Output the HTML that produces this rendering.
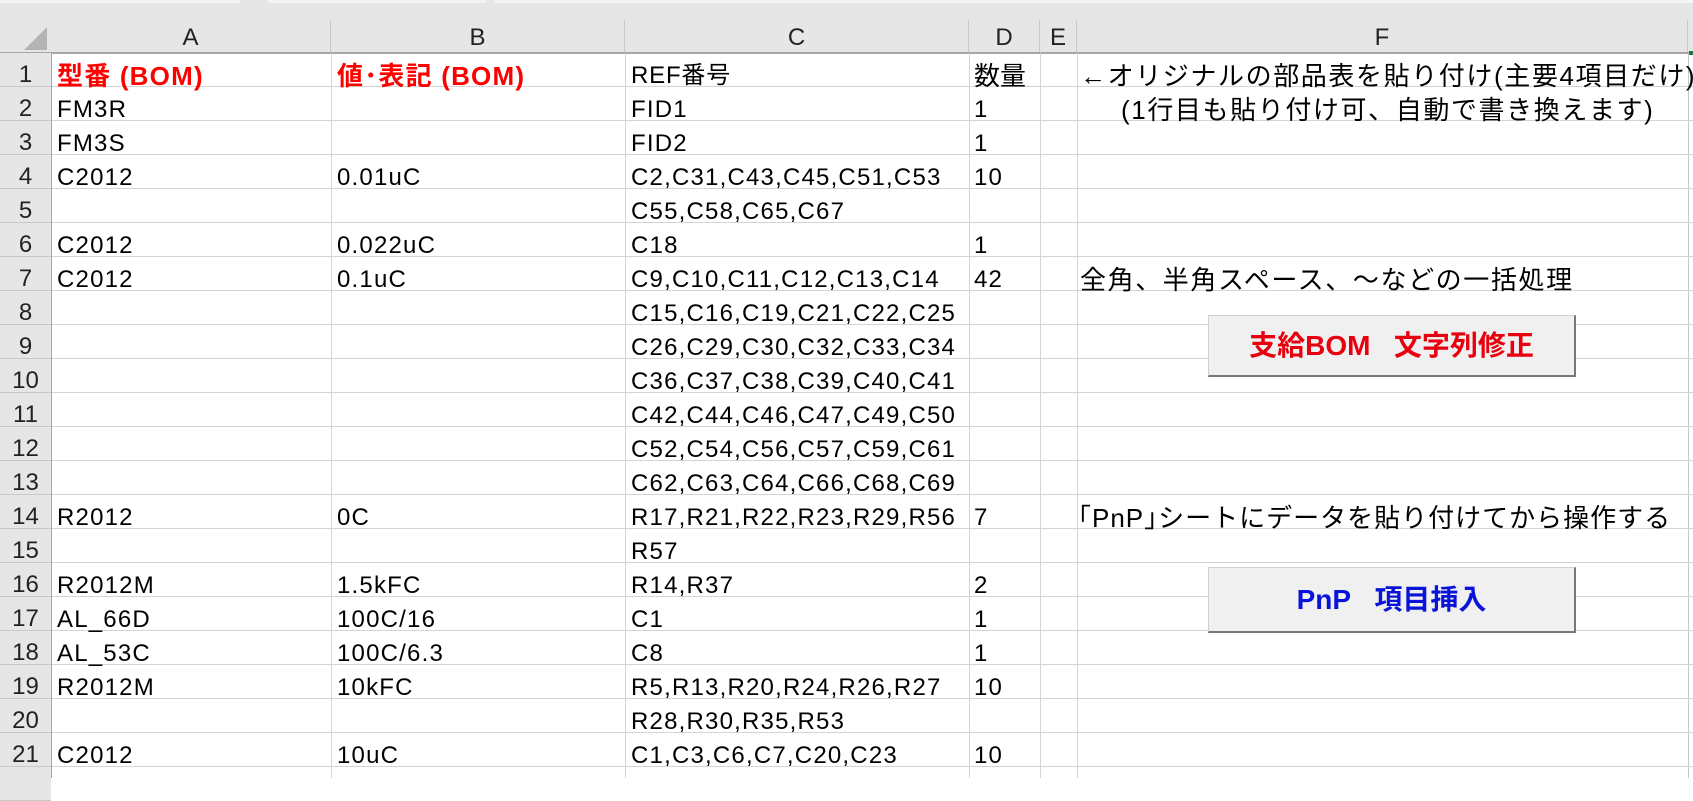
<!DOCTYPE html>
<html><head><meta charset="utf-8"><style>
body{margin:0;width:1693px;height:778px;overflow:hidden;background:#fff;position:relative;font-family:"Liberation Sans","Noto Sans CJK JP",sans-serif;}
.top{position:absolute;left:0;top:0;width:1693px;height:53px;background:#e6e6e6;}
.bar{position:absolute;top:0;height:3px;background:#f4f4f4;}
.ch{position:absolute;top:20px;height:33px;line-height:36px;text-align:center;font-size:24px;color:#222;border-right:1px solid #c8c8c8;box-sizing:border-box;}
.hline{position:absolute;left:0;top:52px;width:1693px;height:2px;background:#a6a6a6;}
.rh{position:absolute;left:0;width:51px;background:#e6e6e6;text-align:center;font-size:24px;color:#222;line-height:34px;border-bottom:1px solid #c8c8c8;box-sizing:border-box;padding-top:5px;}
.rhb{position:absolute;left:51px;top:53px;width:1px;height:725px;background:#a6a6a6;}
.gl{position:absolute;left:52px;width:1641px;height:1px;background:#d4d4d4;}
.vl{position:absolute;top:53px;width:1px;height:725px;background:#d4d4d4;}
.t{position:absolute;font-size:24px;letter-spacing:1.2px;white-space:nowrap;color:#000;line-height:34px;margin-top:2px;}
.j{font-size:26px;letter-spacing:1.6px;}
.r{color:#f00;font-weight:bold;font-size:26px;letter-spacing:1.2px;}
.btn{position:absolute;left:1208px;width:368px;background:#f0f0f0;border:1px solid #d0d0d0;border-right:2px solid #777;border-bottom:2px solid #777;box-sizing:border-box;text-align:center;font-weight:bold;font-size:28px;}
</style></head><body>
<div class="top"></div>
<div class="bar" style="left:0;width:240px"></div>
<div class="bar" style="left:268px;width:218px"></div>
<div class="bar" style="left:494px;width:1199px"></div>
<svg style="position:absolute;left:22px;top:27px" width="26" height="24"><polygon points="25,0 25,23 2,23" fill="#b4b4b4"/></svg>
<div class="ch" style="left:51px;width:280px">A</div>
<div class="ch" style="left:331px;width:294px">B</div>
<div class="ch" style="left:625px;width:344px">C</div>
<div class="ch" style="left:969px;width:71px">D</div>
<div class="ch" style="left:1040px;width:37px">E</div>
<div class="ch" style="left:1077px;width:611px">F</div>
<div class="hline"></div>
<div style="position:absolute;left:1688px;top:53px;width:5px;height:725px;background:#fff;border-left:1px solid #c8c8c8"></div>
<div style="position:absolute;left:1689px;top:51px;width:4px;height:4px;background:#217346"></div>

<div class="rh" style="top:53px;height:34px">1</div>
<div class="rh" style="top:87px;height:34px">2</div>
<div class="rh" style="top:121px;height:34px">3</div>
<div class="rh" style="top:155px;height:34px">4</div>
<div class="rh" style="top:189px;height:34px">5</div>
<div class="rh" style="top:223px;height:34px">6</div>
<div class="rh" style="top:257px;height:34px">7</div>
<div class="rh" style="top:291px;height:34px">8</div>
<div class="rh" style="top:325px;height:34px">9</div>
<div class="rh" style="top:359px;height:34px">10</div>
<div class="rh" style="top:393px;height:34px">11</div>
<div class="rh" style="top:427px;height:34px">12</div>
<div class="rh" style="top:461px;height:34px">13</div>
<div class="rh" style="top:495px;height:34px">14</div>
<div class="rh" style="top:529px;height:34px">15</div>
<div class="rh" style="top:563px;height:34px">16</div>
<div class="rh" style="top:597px;height:34px">17</div>
<div class="rh" style="top:631px;height:34px">18</div>
<div class="rh" style="top:665px;height:34px">19</div>
<div class="rh" style="top:699px;height:34px">20</div>
<div class="rh" style="top:733px;height:34px">21</div>
<div class="rh" style="top:767px;height:34px"></div>
<div class="rhb"></div>

<div class="vl" style="left:331px"></div>
<div class="vl" style="left:625px"></div>
<div class="vl" style="left:969px"></div>
<div class="vl" style="left:1040px"></div>
<div class="vl" style="left:1077px"></div>

<div class="gl" style="top:86px"></div><div class="gl" style="top:120px"></div><div class="gl" style="top:154px"></div><div class="gl" style="top:188px"></div><div class="gl" style="top:222px"></div><div class="gl" style="top:256px"></div><div class="gl" style="top:290px"></div><div class="gl" style="top:324px"></div><div class="gl" style="top:358px"></div><div class="gl" style="top:392px"></div><div class="gl" style="top:426px"></div><div class="gl" style="top:460px"></div><div class="gl" style="top:494px"></div><div class="gl" style="top:528px"></div><div class="gl" style="top:562px"></div><div class="gl" style="top:596px"></div><div class="gl" style="top:630px"></div><div class="gl" style="top:664px"></div><div class="gl" style="top:698px"></div><div class="gl" style="top:732px"></div><div class="gl" style="top:766px"></div>

<div class="t r" style="left:57px;top:57px">型番 (BOM)</div>
<div class="t r" style="left:337px;top:57px">値･表記 (BOM)</div>
<div class="t" style="left:631px;top:57px;letter-spacing:0.8px">REF番号</div>
<div class="t j" style="left:974px;top:57px;letter-spacing:0">数量</div>
<div class="t j" style="left:1080px;top:57px">←オリジナルの部品表を貼り付け(主要4項目だけ)</div>
<div class="t" style="left:57px;top:91px">FM3R</div>
<div class="t" style="left:631px;top:91px">FID1</div>
<div class="t" style="left:974px;top:91px">1</div>
<div class="t j" style="left:1121px;top:91px">(1行目も貼り付け可、自動で書き換えます)</div>
<div class="t" style="left:57px;top:125px">FM3S</div>
<div class="t" style="left:631px;top:125px">FID2</div>
<div class="t" style="left:974px;top:125px">1</div>
<div class="t" style="left:57px;top:159px">C2012</div>
<div class="t" style="left:337px;top:159px">0.01uC</div>
<div class="t" style="left:631px;top:159px">C2,C31,C43,C45,C51,C53</div>
<div class="t" style="left:974px;top:159px">10</div>
<div class="t" style="left:631px;top:193px">C55,C58,C65,C67</div>
<div class="t" style="left:57px;top:227px">C2012</div>
<div class="t" style="left:337px;top:227px">0.022uC</div>
<div class="t" style="left:631px;top:227px">C18</div>
<div class="t" style="left:974px;top:227px">1</div>
<div class="t" style="left:57px;top:261px">C2012</div>
<div class="t" style="left:337px;top:261px">0.1uC</div>
<div class="t" style="left:631px;top:261px">C9,C10,C11,C12,C13,C14</div>
<div class="t" style="left:974px;top:261px">42</div>
<div class="t j" style="left:1080px;top:261px">全角、半角スペース、～などの一括処理</div>
<div class="t" style="left:631px;top:295px">C15,C16,C19,C21,C22,C25</div>
<div class="t" style="left:631px;top:329px">C26,C29,C30,C32,C33,C34</div>
<div class="t" style="left:631px;top:363px">C36,C37,C38,C39,C40,C41</div>
<div class="t" style="left:631px;top:397px">C42,C44,C46,C47,C49,C50</div>
<div class="t" style="left:631px;top:431px">C52,C54,C56,C57,C59,C61</div>
<div class="t" style="left:631px;top:465px">C62,C63,C64,C66,C68,C69</div>
<div class="t" style="left:57px;top:499px">R2012</div>
<div class="t" style="left:337px;top:499px">0C</div>
<div class="t" style="left:631px;top:499px">R17,R21,R22,R23,R29,R56</div>
<div class="t" style="left:974px;top:499px">7</div>
<div class="t j" style="left:1078px;top:499px;letter-spacing:1px">｢PnP｣シートにデータを貼り付けてから操作する</div>
<div class="t" style="left:631px;top:533px">R57</div>
<div class="t" style="left:57px;top:567px">R2012M</div>
<div class="t" style="left:337px;top:567px">1.5kFC</div>
<div class="t" style="left:631px;top:567px">R14,R37</div>
<div class="t" style="left:974px;top:567px">2</div>
<div class="t" style="left:57px;top:601px">AL_66D</div>
<div class="t" style="left:337px;top:601px">100C/16</div>
<div class="t" style="left:631px;top:601px">C1</div>
<div class="t" style="left:974px;top:601px">1</div>
<div class="t" style="left:57px;top:635px">AL_53C</div>
<div class="t" style="left:337px;top:635px">100C/6.3</div>
<div class="t" style="left:631px;top:635px">C8</div>
<div class="t" style="left:974px;top:635px">1</div>
<div class="t" style="left:57px;top:669px">R2012M</div>
<div class="t" style="left:337px;top:669px">10kFC</div>
<div class="t" style="left:631px;top:669px">R5,R13,R20,R24,R26,R27</div>
<div class="t" style="left:974px;top:669px">10</div>
<div class="t" style="left:631px;top:703px">R28,R30,R35,R53</div>
<div class="t" style="left:57px;top:737px">C2012</div>
<div class="t" style="left:337px;top:737px">10uC</div>
<div class="t" style="left:631px;top:737px">C1,C3,C6,C7,C20,C23</div>
<div class="t" style="left:974px;top:737px">10</div>

<div class="btn" style="top:315px;height:62px;line-height:60px;color:#e8000e">支給BOM&nbsp;&nbsp;&nbsp;文字列修正</div>
<div class="btn" style="top:567px;height:66px;line-height:64px;color:#0a14d8">PnP&nbsp;&nbsp;&nbsp;項目挿入</div>
</body></html>
